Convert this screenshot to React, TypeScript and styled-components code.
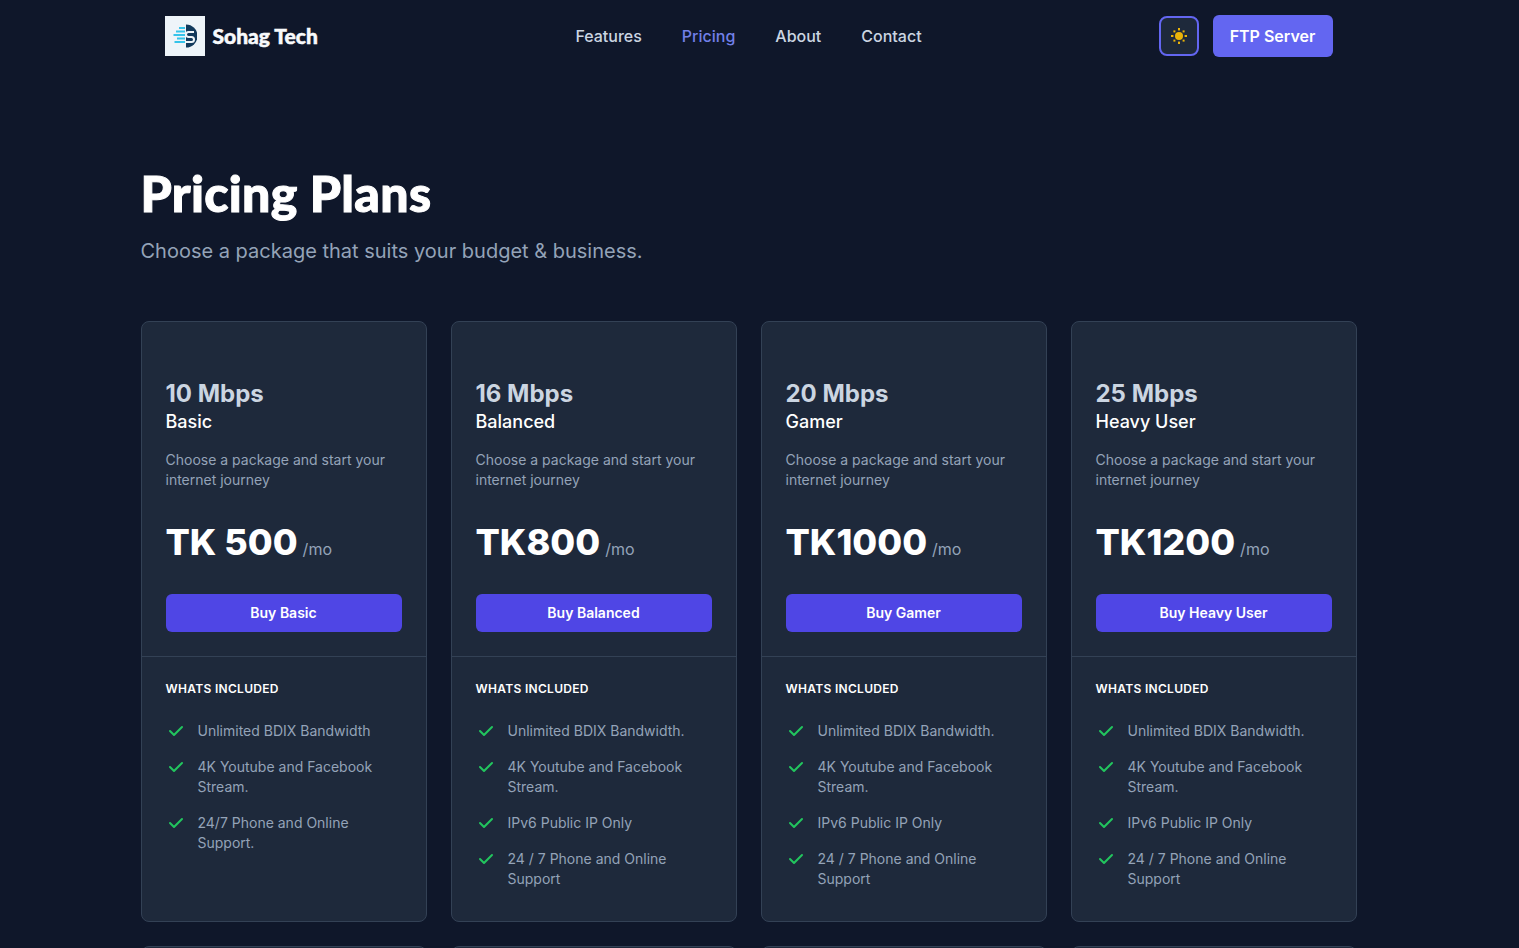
import React from 'react';
import styled, { createGlobalStyle } from 'styled-components';

const GlobalStyle = createGlobalStyle`
    html, body {
        margin: 0;
        height: 948px;
        overflow: hidden;
        background: #0f172a;
    }
    * { box-sizing: border-box; }
`;

type Plan = {
    speed: string;
    name: string;
    price: string;
    features: string[];
};

const plans: Plan[] = [
    {
        speed: '10 Mbps',
        name: 'Basic',
        price: 'TK 500',
        features: ['Unlimited BDIX Bandwidth', '4K Youtube and Facebook Stream.', '24/7 Phone and Online Support.'],
    },
    {
        speed: '16 Mbps',
        name: 'Balanced',
        price: 'TK800',
        features: ['Unlimited BDIX Bandwidth.', '4K Youtube and Facebook Stream.', 'IPv6 Public IP Only', '24 / 7 Phone and Online Support'],
    },
    {
        speed: '20 Mbps',
        name: 'Gamer',
        price: 'TK1000',
        features: ['Unlimited BDIX Bandwidth.', '4K Youtube and Facebook Stream.', 'IPv6 Public IP Only', '24 / 7 Phone and Online Support'],
    },
    {
        speed: '25 Mbps',
        name: 'Heavy User',
        price: 'TK1200',
        features: ['Unlimited BDIX Bandwidth.', '4K Youtube and Facebook Stream.', 'IPv6 Public IP Only', '24 / 7 Phone and Online Support'],
    },
];

const navLinks = ['Features', 'Pricing', 'About', 'Contact'];

const Page = styled.div`
    width: 1497px;
    font-family: Inter, 'Liberation Sans', sans-serif;
    color: #fff;
`;

const Container = styled.div`
    width: 1216px;
    margin: 0 auto;
`;

const NavBar = styled.nav`
    display: flex;
    align-items: center;
    justify-content: space-between;
    height: 72px;
    padding: 0 24px;
`;

const Brand = styled.div`
    display: flex;
    align-items: center;
    gap: 8px;
    width: 152px;
    white-space: nowrap;
`;

const LogoBox = styled.div`
    flex-shrink: 0;
    width: 40px;
    height: 40px;
    background: #eef4f9;
    display: flex;
    align-items: center;
    justify-content: center;
`;

const BrandName = styled.span`
    font-family: Lato, sans-serif;
    font-weight: 900;
    font-size: 21px;
    line-height: 24px;
    -webkit-text-stroke: 0.5px #f8fafc;
    color: #f8fafc;
`;

const NavLinks = styled.div`
    display: flex;
    gap: 40px;
    margin-left: 22px;
`;

const NavLink = styled.a<{ $active?: boolean }>`
    font-size: 16px;
    font-weight: 500;
    line-height: 24px;
    color: ${({ $active }) => ($active ? '#7280e8' : '#cbd5e1')};
`;

const NavActions = styled.div`
    display: flex;
    align-items: center;
    gap: 14px;
`;

const ThemeButton = styled.button`
    width: 40px;
    height: 40px;
    padding: 0;
    border: 2px solid #6366f1;
    border-radius: 8px;
    background: #1e293b;
    display: flex;
    align-items: center;
    justify-content: center;
`;

const ServerButton = styled.button`
    width: 120px;
    height: 42px;
    border: 0;
    border-radius: 6px;
    background: #6366f1;
    color: #fff;
    font-family: inherit;
    font-size: 16px;
    font-weight: 600;
`;

const Header = styled.header`
    padding-top: 91px;
    height: 249px;
`;

const Title = styled.h1`
    margin: 0;
    font-family: Lato, sans-serif;
    font-weight: 900;
    font-size: 50px;
    line-height: 60px;
    letter-spacing: 0.3px;
    -webkit-text-stroke: 1px #fff;
    color: #fff;
`;

const Subtitle = styled.p`
    margin: 14px 0 0;
    font-size: 20px;
    line-height: 28px;
    color: #94a3b8;
`;

const CardGrid = styled.div`
    display: grid;
    grid-template-columns: repeat(4, 286px);
    gap: 24px;
`;

const Card = styled.article`
    display: flex;
    flex-direction: column;
    height: 601px;
    border: 1px solid #334155;
    border-radius: 8px;
    background: #1e293b;
`;

const CardTop = styled.div`
    padding: 56px 24px 24px;
    border-bottom: 1px solid #334155;
`;

const Speed = styled.h2`
    margin: 0;
    font-size: 24px;
    line-height: 32px;
    font-weight: 700;
    color: #cbd5e1;
`;

const PlanName = styled.h3`
    margin: 0;
    font-size: 18px;
    line-height: 24px;
    font-weight: 500;
    color: #fff;
`;

const Blurb = styled.p`
    margin: 16px 0 0;
    font-size: 14px;
    line-height: 20px;
    color: #94a3b8;
`;

const PriceRow = styled.p`
    margin: 30px 0 0;
    display: flex;
    align-items: baseline;
    gap: 5px;
    height: 44px;
`;

const Price = styled.span`
    font-size: 36px;
    line-height: 44px;
    font-weight: 800;
    color: #fff;
`;

const PricePer = styled.span`
    font-size: 16px;
    color: #94a3b8;
`;

const BuyButton = styled.a`
    display: block;
    margin-top: 30px;
    height: 38px;
    border-radius: 6px;
    background: #4f46e5;
    color: #fff;
    font-size: 14px;
    font-weight: 600;
    line-height: 38px;
    text-align: center;
`;

const CardBottom = styled.div`
    padding: 24px 24px 0;
`;

const IncludedLabel = styled.h4`
    margin: 0;
    font-size: 12px;
    line-height: 16px;
    font-weight: 600;
    letter-spacing: 0.3px;
    color: #fff;
`;

const FeatureList = styled.ul`
    list-style: none;
    margin: 24px 0 0;
    padding: 0;
    display: flex;
    flex-direction: column;
    gap: 16px;
`;

const FeatureItem = styled.li`
    display: flex;
    gap: 12px;
    font-size: 14px;
    line-height: 20px;
    color: #94a3b8;
`;

const CheckIcon = styled.svg`
    flex-shrink: 0;
    width: 20px;
    height: 20px;
    color: #22c55e;
`;

const Check = () => (
    <CheckIcon viewBox="0 0 20 20" fill="currentColor">
        <path
            fillRule="evenodd"
            clipRule="evenodd"
            d="M16.707 5.293a1 1 0 010 1.414l-8 8a1 1 0 01-1.414 0l-4-4a1 1 0 011.414-1.414L8 12.586l7.293-7.293a1 1 0 011.414 0z"
        />
    </CheckIcon>
);

const SunIcon = () => (
    <svg width="20" height="20" viewBox="0 0 20 20" fill="#eab308">
        <circle cx="10" cy="10" r="4" />
        <rect x="9" y="2" width="2" height="2.4" />
        <rect x="9" y="15.6" width="2" height="2.4" />
        <rect x="2" y="9" width="2.4" height="2" />
        <rect x="15.6" y="9" width="2.4" height="2" />
        <rect x="4.4" y="4.4" width="2" height="2" />
        <rect x="13.6" y="4.4" width="2" height="2" />
        <rect x="4.4" y="13.6" width="2" height="2" />
        <rect x="13.6" y="13.6" width="2" height="2" />
    </svg>
);

// ロゴ: 左が水色の速度線、右が紺の半円と白いS
const Logo = () => (
    <svg width="24" height="24" viewBox="0 0 24 24">
        <path d="M13 0.5a11.5 11.5 0 010 23z" fill="#12395c" />
        <path d="M21 8h-5.5a2.5 2.5 0 000 5h3a2.5 2.5 0 010 5H13" stroke="#eef4f9" strokeWidth="2" fill="none" />
        <path d="M6 4h6M3 7.5h9M0.5 11h11.5M4 14.5h8M1.5 18h10.5" stroke="#35c3ea" strokeWidth="2" fill="none" />
    </svg>
);

const PlanCard: React.FC<{ plan: Plan }> = ({ plan }) => (
    <Card>
        <CardTop>
            <Speed>{plan.speed}</Speed>
            <PlanName>{plan.name}</PlanName>
            <Blurb>Choose a package and start your internet journey</Blurb>
            <PriceRow>
                <Price>{plan.price}</Price>
                <PricePer>/mo</PricePer>
            </PriceRow>
            <BuyButton>Buy {plan.name}</BuyButton>
        </CardTop>
        <CardBottom>
            <IncludedLabel>WHATS INCLUDED</IncludedLabel>
            <FeatureList>
                {plan.features.map((feature) => (
                    <FeatureItem key={feature}>
                        <Check />
                        <span>{feature}</span>
                    </FeatureItem>
                ))}
            </FeatureList>
        </CardBottom>
    </Card>
);

export default function App() {
    return (
        <Page>
            <GlobalStyle />
            <Container>
                <NavBar>
                    <Brand>
                        <LogoBox>
                            <Logo />
                        </LogoBox>
                        <BrandName>Sohag Tech</BrandName>
                    </Brand>
                    <NavLinks>
                        {navLinks.map((link) => (
                            <NavLink key={link} $active={link === 'Pricing'}>
                                {link}
                            </NavLink>
                        ))}
                    </NavLinks>
                    <NavActions>
                        <ThemeButton>
                            <SunIcon />
                        </ThemeButton>
                        <ServerButton>FTP Server</ServerButton>
                    </NavActions>
                </NavBar>
                <Header>
                    <Title>Pricing Plans</Title>
                    <Subtitle>Choose a package that suits your budget &amp; business.</Subtitle>
                </Header>
                <CardGrid>
                    {plans.map((plan) => (
                        <PlanCard key={plan.speed} plan={plan} />
                    ))}
                    {/* 次の行は上端だけ画面に見える */}
                    {plans.map((plan) => (
                        <Card key={`next-${plan.speed}`} />
                    ))}
                </CardGrid>
            </Container>
        </Page>
    );
}
